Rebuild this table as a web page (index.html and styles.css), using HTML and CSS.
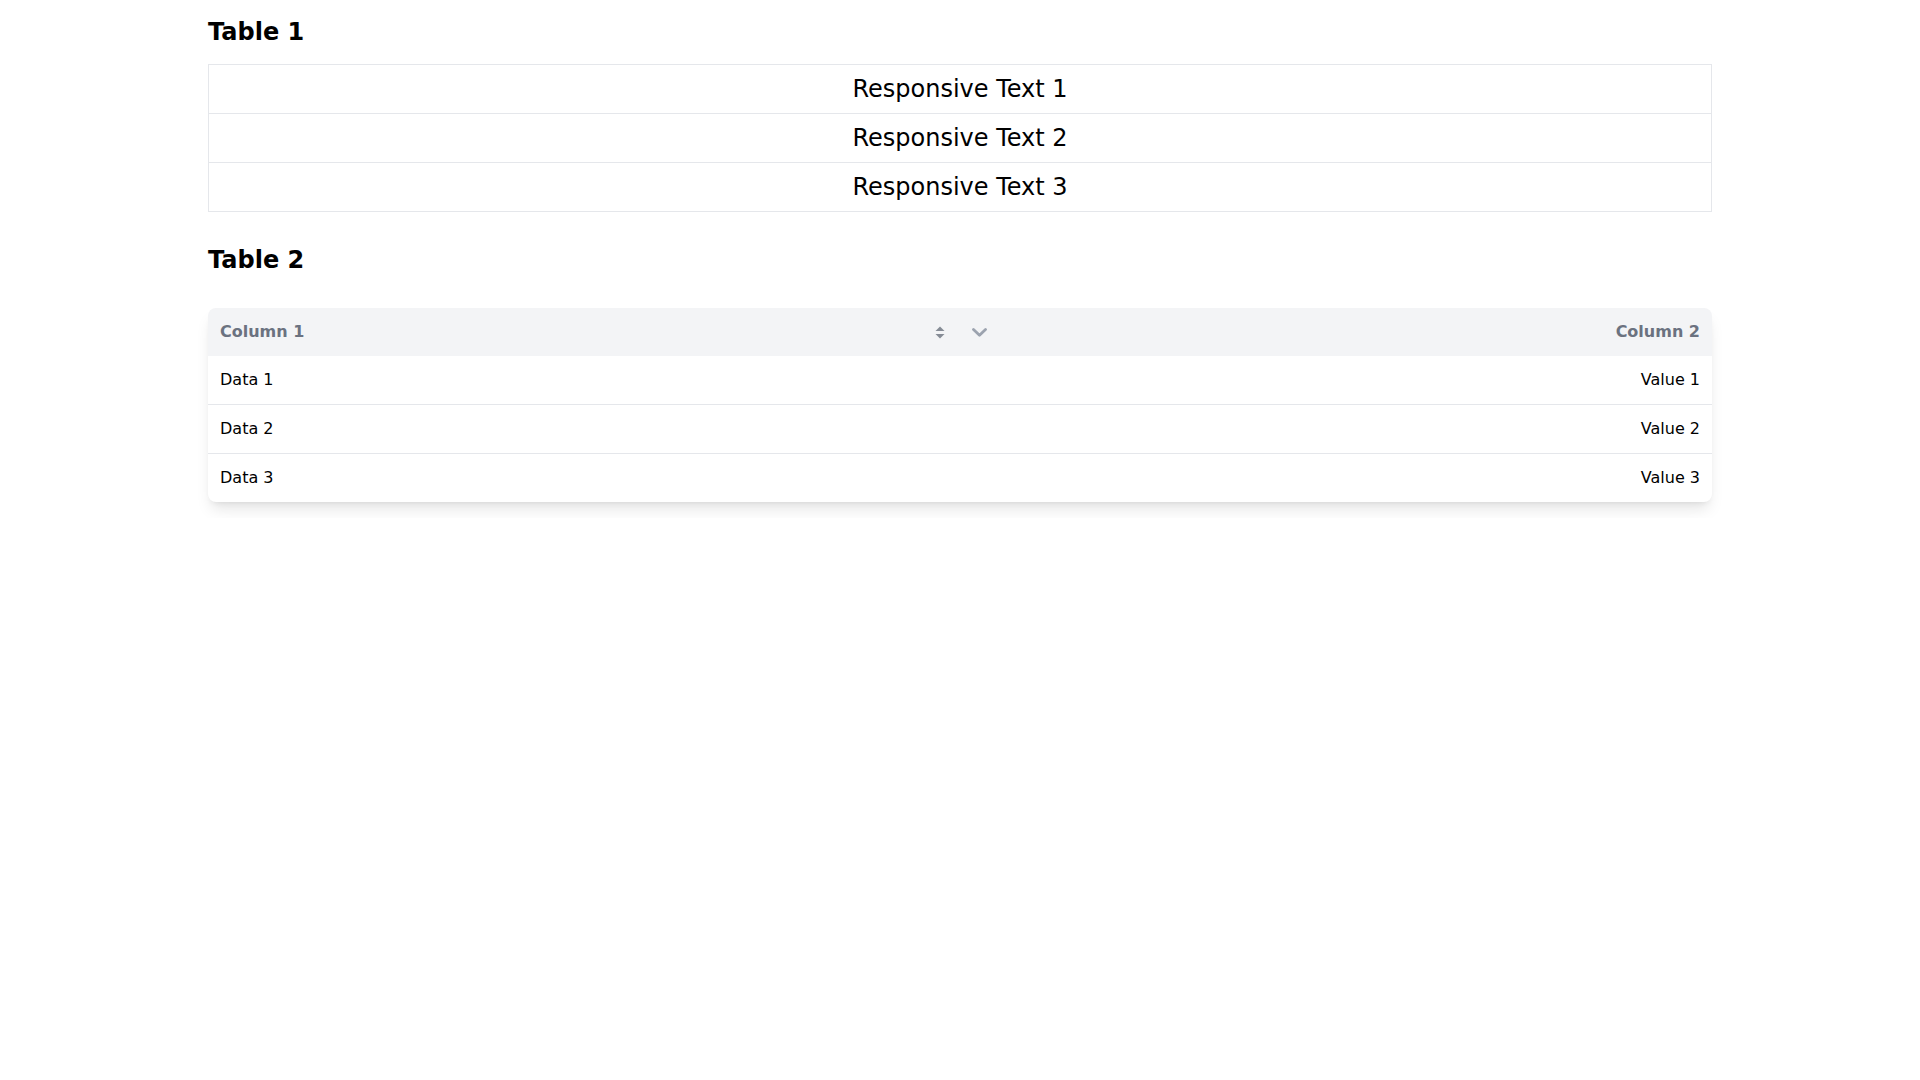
FILE: index.html
```html
<!DOCTYPE html>
<html lang="en">
<head>
<meta charset="utf-8">
<title>Tables</title>
<link rel="stylesheet" href="styles.css">
</head>
<body>
<main class="container">
  <section class="section">
    <h2 class="title">Table 1</h2>
    <table class="simple-table">
      <tbody>
        <tr><td>Responsive Text 1</td></tr>
        <tr><td>Responsive Text 2</td></tr>
        <tr><td>Responsive Text 3</td></tr>
      </tbody>
    </table>
  </section>
  <section class="section section-2">
    <h2 class="title title-2">Table 2</h2>
    <div class="card">
      <table class="data-table">
        <thead>
          <tr>
            <th class="col-left">
              <div class="th-inner">
                <span>Column 1</span>
                <svg class="sort-icon" width="10" height="13" viewBox="0 0 10 13" aria-hidden="true">
                  <path d="M5 0.5 L9.5 5 H0.5 Z" fill="#868c96"/>
                  <path d="M5 12.5 L9.5 8 H0.5 Z" fill="#868c96"/>
                </svg>
              </div>
            </th>
            <th class="col-right">
              <div class="th-inner">
                <svg class="chevron-icon" width="15" height="9" viewBox="0 0 15 9" aria-hidden="true">
                  <path d="M1.5 1.5 L7.5 7.2 L13.5 1.5" fill="none" stroke="#9ca3af" stroke-width="2.8" stroke-linecap="round" stroke-linejoin="round"/>
                </svg>
                <span>Column 2</span>
              </div>
            </th>
          </tr>
        </thead>
        <tbody>
          <tr><td class="col-left">Data 1</td><td class="col-right">Value 1</td></tr>
          <tr><td class="col-left">Data 2</td><td class="col-right">Value 2</td></tr>
          <tr><td class="col-left">Data 3</td><td class="col-right">Value 3</td></tr>
        </tbody>
      </table>
    </div>
  </section>
</main>
</body>
</html>
```

FILE: styles.css
```css
* { box-sizing: border-box; }

html, body {
  margin: 0;
  padding: 0;
  background: #ffffff;
}

body {
  font-family: "DejaVu Sans", "Liberation Sans", sans-serif;
  color: #000000;
}

.container {
  max-width: 1536px;
  margin: 0 auto;
  padding: 16px 16px;
}

.section-2 {
  margin-top: 32px;
}

.title {
  margin: 0 0 16px 0;
  font-size: 24px;
  line-height: 32px;
  font-weight: 700;
}

.title-2 {
  margin-bottom: 32px;
}

.simple-table {
  width: 100%;
  border-collapse: separate;
  border-spacing: 0;
  border: 1px solid #e5e7eb;
}

.simple-table td {
  padding: 10px 0;
  text-align: center;
  font-size: 24px;
  line-height: 28px;
}

.simple-table tr + tr td {
  border-top: 1px solid #e5e7eb;
}

.card {
  background: #ffffff;
  border-radius: 8px;
  overflow: hidden;
  box-shadow: 0 10px 15px -3px rgba(0, 0, 0, 0.1), 0 4px 6px -4px rgba(0, 0, 0, 0.1);
}

.data-table {
  width: 100%;
  border-collapse: separate;
  border-spacing: 0;
  table-layout: fixed;
}

.data-table thead tr {
  background: #f3f4f6;
}

.data-table th {
  padding: 14px 12px;
  line-height: 20px;
  font-size: 16px;
  font-weight: 700;
  color: #6b7280;
}

.th-inner {
  display: flex;
  align-items: center;
  justify-content: space-between;
}

.data-table td {
  padding: 14px 12px;
  line-height: 20px;
  font-size: 16px;
  color: #000000;
}

.data-table tbody tr + tr td {
  border-top: 1px solid #e5e7eb;
}

.col-left { text-align: left; }
.col-right { text-align: right; }

.sort-icon {
  display: block;
  margin-right: 3px;
}

.chevron-icon { display: block; }
```
